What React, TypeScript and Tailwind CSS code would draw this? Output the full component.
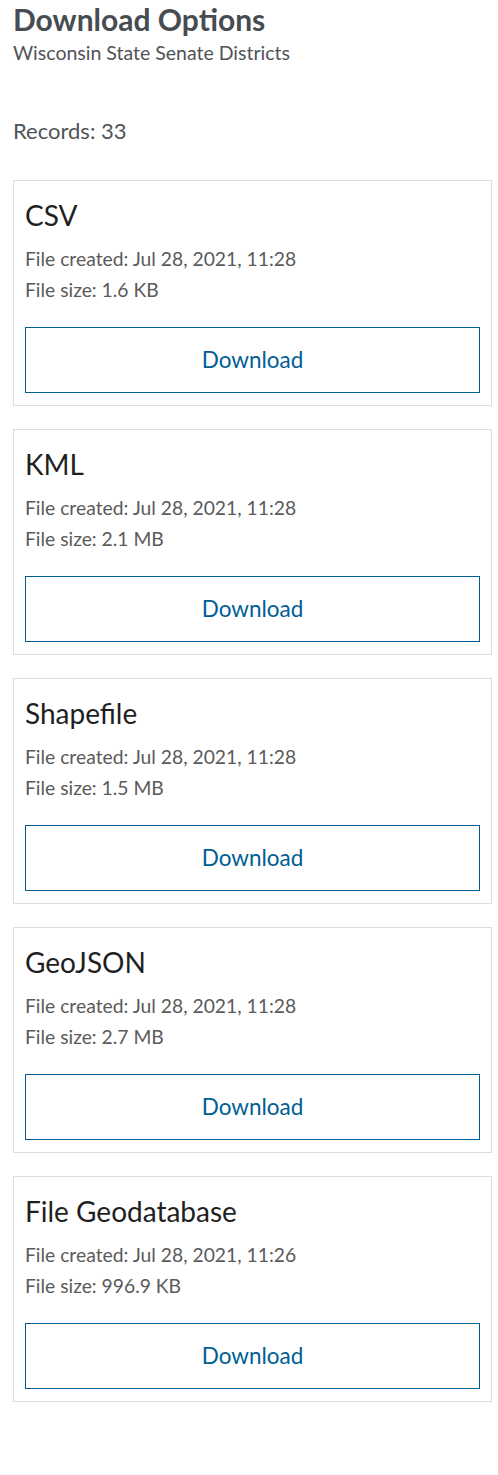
const files = [
  { format: "CSV", created: "Jul 28, 2021, 11:28", size: "1.6 KB" },
  { format: "KML", created: "Jul 28, 2021, 11:28", size: "2.1 MB" },
  { format: "Shapefile", created: "Jul 28, 2021, 11:28", size: "1.5 MB" },
  { format: "GeoJSON", created: "Jul 28, 2021, 11:28", size: "2.7 MB" },
  { format: "File Geodatabase", created: "Jul 28, 2021, 11:26", size: "996.9 KB" },
];

const App = () => {
  return (
    <div className="min-h-screen bg-white pl-[13px] pr-[6px] font-['Lato','Noto_Sans',sans-serif]">
      <h1 className="text-[30px] font-bold leading-[38px] text-[#474c52]">
        Download Options
      </h1>
      <p className="mt-[3px] text-[19.5px] leading-[24px] text-[#4f5358]">
        Wisconsin State Senate Districts
      </p>

      <p className="mt-[53px] text-[22px] leading-[26px] text-[#4f5358]">Records: 33</p>

      <section className="mt-[36px] flex flex-col gap-[23px]">
        {files.map((file) => (
          <article
            key={file.format}
            className="flex flex-col border border-[#dedede] bg-white px-[11px] pt-[16px] pb-[12px]"
          >
            <h2 className="text-[28px] leading-[36px] text-[#1f1f1f]">{file.format}</h2>
            <div className="mt-[10px] text-[19.3px] leading-[31px] text-[#5a5a5a]">
              <p>File created: {file.created}</p>
              <p>File size: {file.size}</p>
            </div>
            <button
              type="button"
              className="mt-[22px] h-[66px] w-full border border-[#005e95] bg-white text-[22.5px] text-[#005e95]"
            >
              Download
            </button>
          </article>
        ))}
      </section>
    </div>
  );
};

export default App;
